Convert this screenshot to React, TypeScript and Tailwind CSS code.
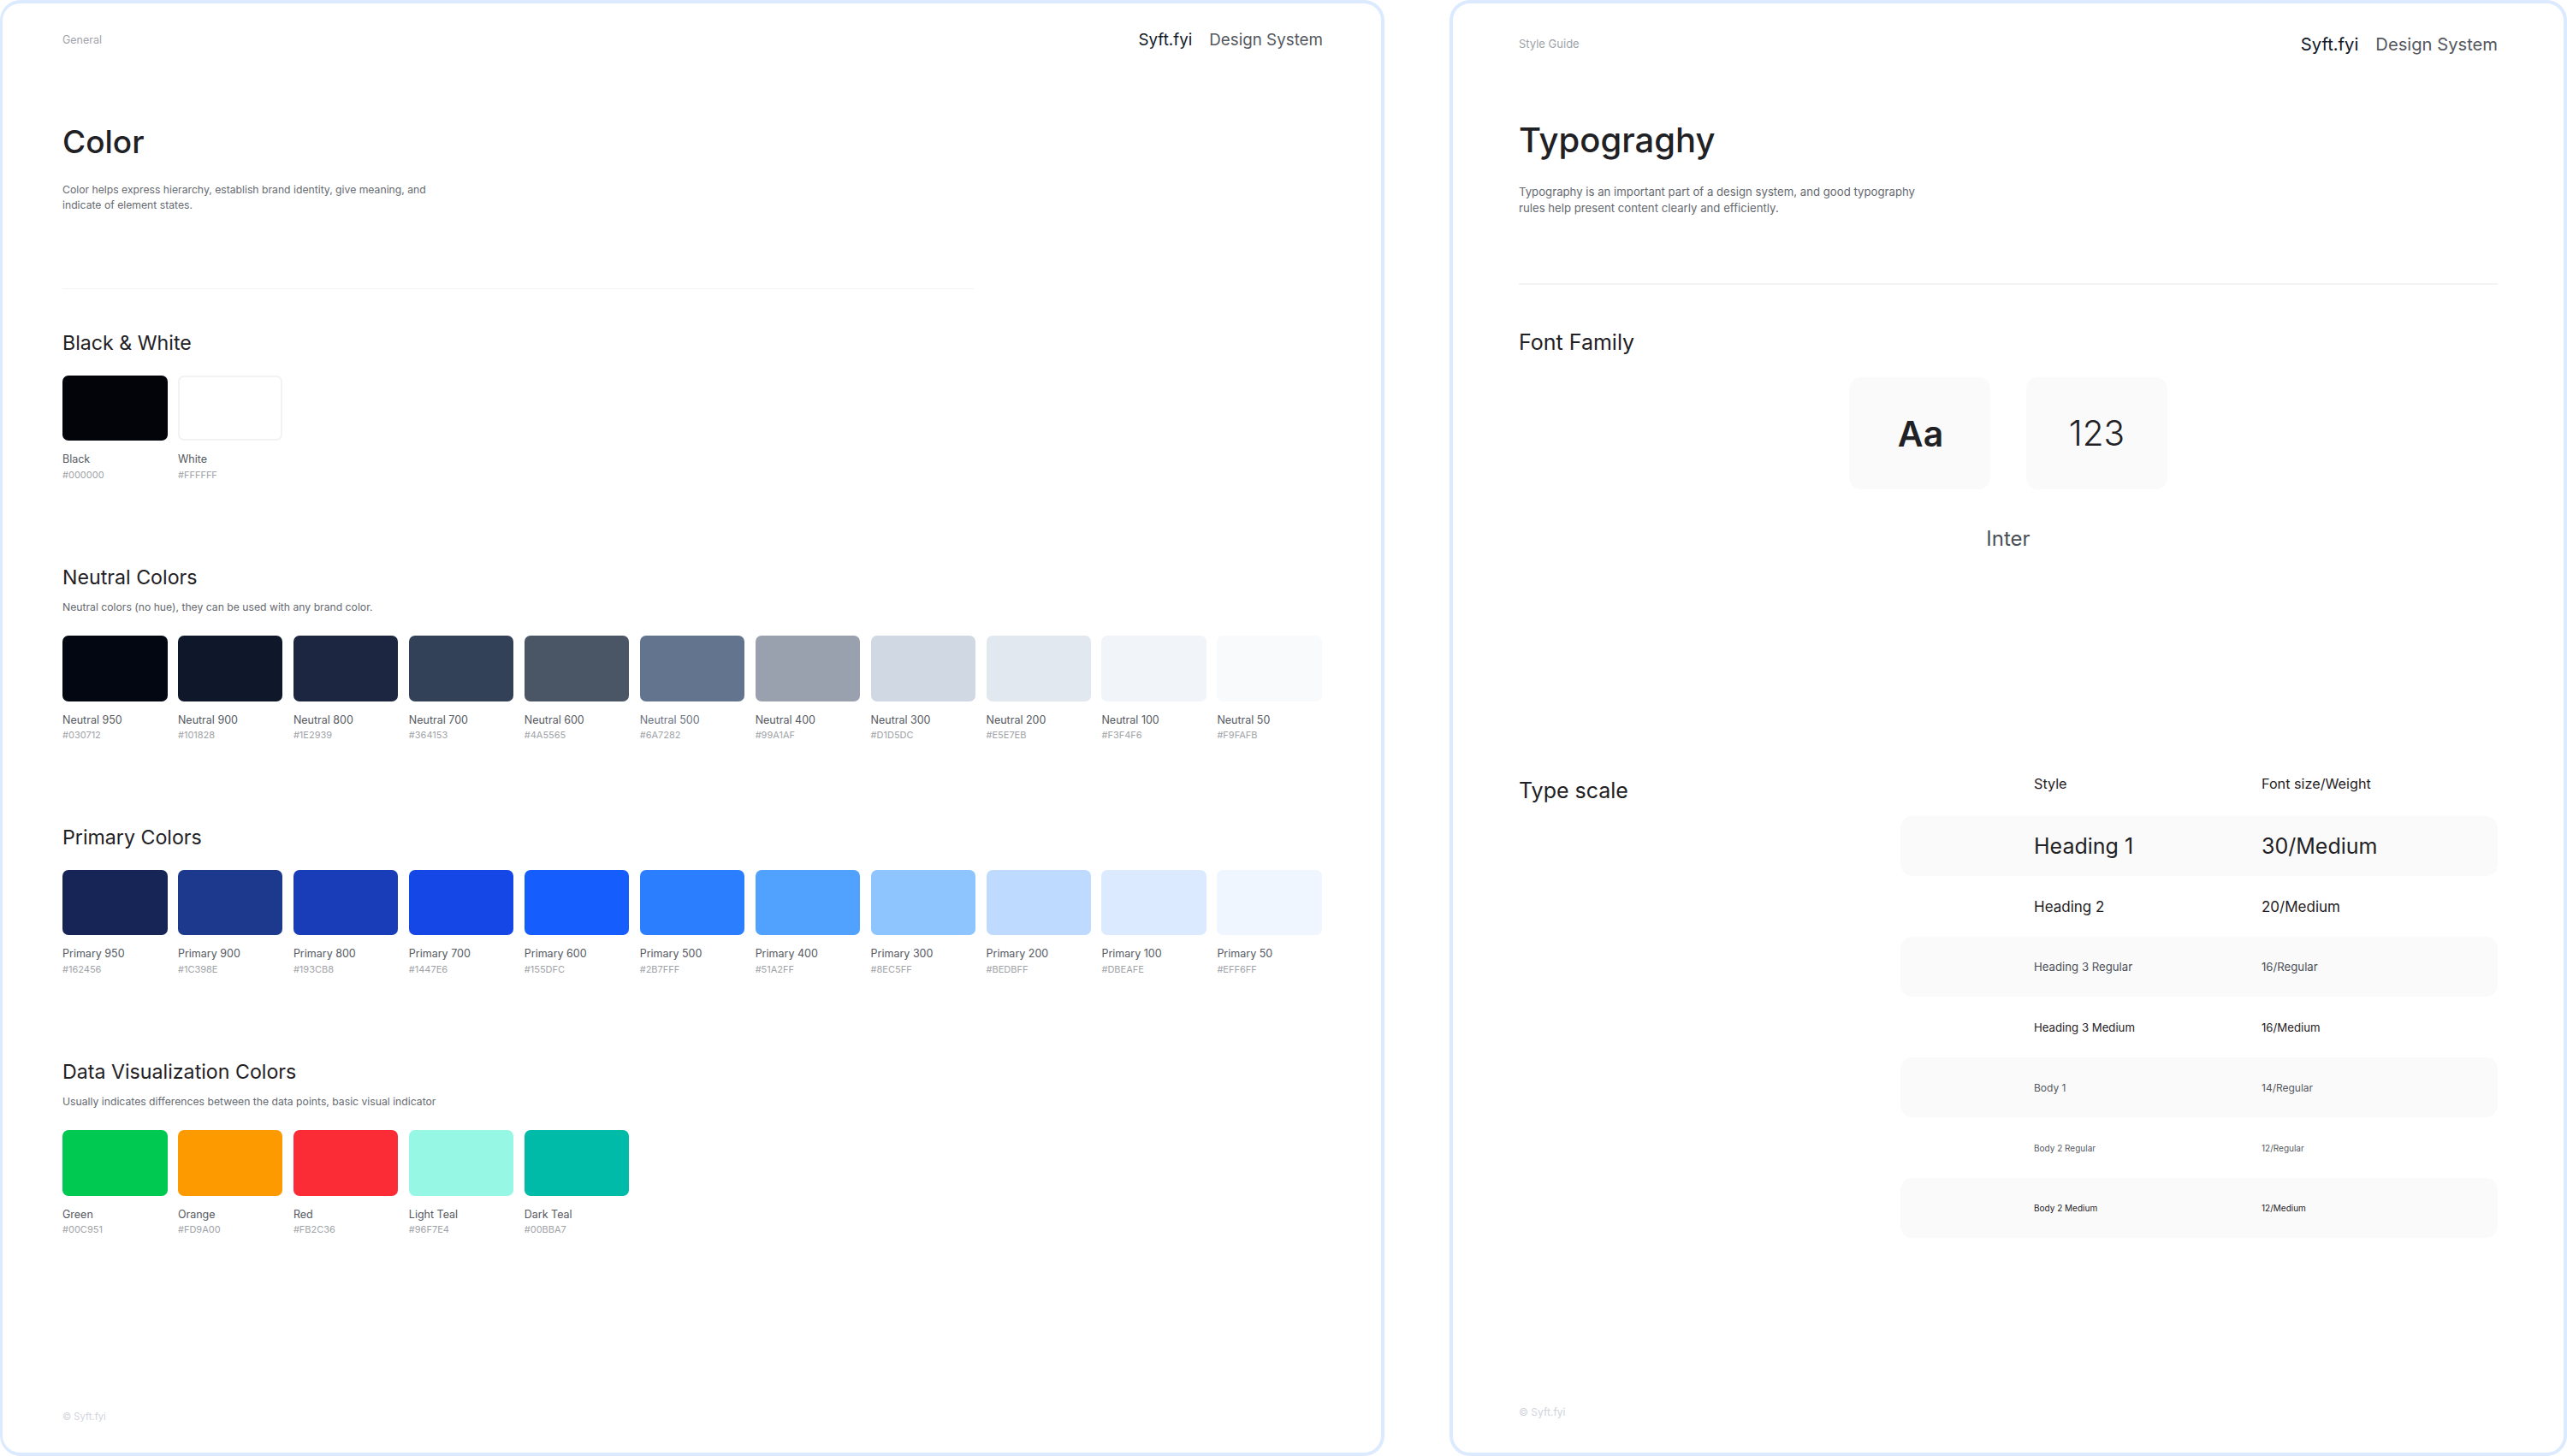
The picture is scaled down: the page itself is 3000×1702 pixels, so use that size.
type Swatch = { name: string; hex: string; bg: string; border?: boolean; muted?: boolean };

const blackWhite: Swatch[] = [
  { name: 'Black', hex: '#000000', bg: 'bg-[#02040a]' },
  { name: 'White', hex: '#FFFFFF', bg: 'bg-white', border: true },
];

const neutrals: Swatch[] = [
  { name: 'Neutral 950', hex: '#030712', bg: 'bg-[#030712]' },
  { name: 'Neutral 900', hex: '#101828', bg: 'bg-[#0f172a]' },
  { name: 'Neutral 800', hex: '#1E2939', bg: 'bg-[#1c2640]' },
  { name: 'Neutral 700', hex: '#364153', bg: 'bg-[#334158]' },
  { name: 'Neutral 600', hex: '#4A5565', bg: 'bg-[#4a5565]' },
  { name: 'Neutral 500', hex: '#6A7282', bg: 'bg-[#62748e]', muted: true },
  { name: 'Neutral 400', hex: '#99A1AF', bg: 'bg-[#99a1af]' },
  { name: 'Neutral 300', hex: '#D1D5DC', bg: 'bg-[#cfd8e3]' },
  { name: 'Neutral 200', hex: '#E5E7EB', bg: 'bg-[#e2e8f0]' },
  { name: 'Neutral 100', hex: '#F3F4F6', bg: 'bg-[#f1f5f9]' },
  { name: 'Neutral 50', hex: '#F9FAFB', bg: 'bg-[#f8fafc]' },
];

const primaries: Swatch[] = [
  { name: 'Primary 950', hex: '#162456', bg: 'bg-[#162456]' },
  { name: 'Primary 900', hex: '#1C398E', bg: 'bg-[#1c398e]' },
  { name: 'Primary 800', hex: '#193CB8', bg: 'bg-[#193cb8]' },
  { name: 'Primary 700', hex: '#1447E6', bg: 'bg-[#1447e6]' },
  { name: 'Primary 600', hex: '#155DFC', bg: 'bg-[#155dfc]' },
  { name: 'Primary 500', hex: '#2B7FFF', bg: 'bg-[#2b7fff]' },
  { name: 'Primary 400', hex: '#51A2FF', bg: 'bg-[#51a2ff]' },
  { name: 'Primary 300', hex: '#8EC5FF', bg: 'bg-[#8ec5ff]' },
  { name: 'Primary 200', hex: '#BEDBFF', bg: 'bg-[#bedbff]' },
  { name: 'Primary 100', hex: '#DBEAFE', bg: 'bg-[#dbeafe]' },
  { name: 'Primary 50', hex: '#EFF6FF', bg: 'bg-[#eff6ff]' },
];

const dataViz: Swatch[] = [
  { name: 'Green', hex: '#00C951', bg: 'bg-[#00c951]' },
  { name: 'Orange', hex: '#FD9A00', bg: 'bg-[#fd9a00]' },
  { name: 'Red', hex: '#FB2C36', bg: 'bg-[#fb2c36]' },
  { name: 'Light Teal', hex: '#96F7E4', bg: 'bg-[#96f7e4]' },
  { name: 'Dark Teal', hex: '#00BBA7', bg: 'bg-[#00bba7]' },
];

const typeRows = [
  { style: 'Heading 1', spec: '30/Medium', cls: 'text-[25px] text-[#1f2125]' },
  { style: 'Heading 2', spec: '20/Medium', cls: 'text-[17px] text-[#1f2125]' },
  { style: 'Heading 3 Regular', spec: '16/Regular', cls: 'text-[13.2px] text-[#4a4f57]' },
  { style: 'Heading 3 Medium', spec: '16/Medium', cls: 'text-[13.2px] text-[#1f2125]' },
  { style: 'Body 1', spec: '14/Regular', cls: 'text-[12px] text-[#55595f]' },
  { style: 'Body 2 Regular', spec: '12/Regular', cls: 'text-[10px] text-[#55595f]' },
  { style: 'Body 2 Medium', spec: '12/Medium', cls: 'text-[10px] text-[#1f2125]' },
];

const Brand = ({ size }: { size: string }) => (
  <div className={`flex items-center gap-5 ${size}`}>
    <span className="text-[#101828]">Syft.fyi</span>
    <span className="text-[#55595f]">Design System</span>
  </div>
);

const SwatchRow = ({ items }: { items: Swatch[] }) => (
  <div className="flex gap-[12.45px]">
    {items.map((s) => (
      <div key={s.name} className="w-[122.5px]">
        <div className={`h-[76.5px] rounded-[7px] ${s.bg} ${s.border ? 'border-2 border-[#f1f2f4]' : ''}`} />
        <div className={`mt-[14px] text-[12.5px] leading-4 ${s.muted ? 'text-[#6a7282]' : 'text-[#55595f]'}`}>{s.name}</div>
        <div className="mt-[2.5px] text-[11px] leading-[14px] text-[#a0a3a8]">{s.hex}</div>
      </div>
    ))}
  </div>
);

const App = () => {
  return (
    <div className="flex h-[1702px] w-[3000px] gap-[76px] bg-white font-[Inter,sans-serif]">
      {/* Color panel */}
      <section className="flex w-[1618px] flex-col rounded-[24px] border-[4px] border-l-[3px] border-[#dbeafe] bg-white pb-[35px] pl-[70px] pr-[68px] pt-[29px]">
        <div className="flex h-[28px] items-center justify-between">
          <span className="text-[12.5px] text-[#a0a3a8]">General</span>
          <Brand size="text-[18.8px]" />
        </div>

        <h1 className="mt-[82px] text-[37px] font-medium leading-[46px] text-[#1f2125]">Color</h1>
        <p className="mt-[24px] w-[440px] text-[12.2px] leading-[18.4px] text-[#666a70]">
          Color helps express hierarchy, establish brand identity, give meaning, and indicate of element states.
        </p>
        <div className="mt-[87px] h-[1.5px] w-[1065px] bg-[#f3f4f6]" />

        <h2 className="mt-[47.5px] text-[23.2px] leading-[30px] text-[#1f2125]">Black &amp; White</h2>
        <div className="mt-[23.1px]">
          <SwatchRow items={blackWhite} />
        </div>

        <h2 className="mt-[98px] text-[23.2px] leading-[30px] text-[#1f2125]">Neutral Colors</h2>
        <p className="mt-[11px] text-[12.2px] leading-[18px] text-[#666a70]">
          Neutral colors (no hue), they can be used with any brand color.
        </p>
        <div className="mt-[24.4px]">
          <SwatchRow items={neutrals} />
        </div>

        <h2 className="mt-[98px] text-[23.2px] leading-[30px] text-[#1f2125]">Primary Colors</h2>
        <div className="mt-[22.4px]">
          <SwatchRow items={primaries} />
        </div>

        <h2 className="mt-[98px] text-[23.2px] leading-[30px] text-[#1f2125]">Data Visualization Colors</h2>
        <p className="mt-[11.2px] text-[12.2px] leading-[18px] text-[#666a70]">
          Usually indicates differences between the data points, basic visual indicator
        </p>
        <div className="mt-[24.3px]">
          <SwatchRow items={dataViz} />
        </div>

        <div className="mt-auto text-[11.2px] leading-[14px] text-[#d1d5dc]">© Syft.fyi</div>
      </section>

      {/* Typography panel */}
      <section className="flex w-[1306px] flex-col rounded-[24px] border-[4px] border-[#dbeafe] bg-white pb-[40px] pl-[77px] pr-[77px] pt-[33px]">
        <div className="flex h-[30px] items-center justify-between">
          <span className="text-[13px] text-[#a0a3a8]">Style Guide</span>
          <Brand size="text-[20.2px]" />
        </div>

        <h1 className="mt-[72px] text-[40px] font-medium leading-[50px] text-[#1f2125]">Typograghy</h1>
        <p className="mt-[25.7px] w-[480px] text-[13.2px] leading-[19.5px] text-[#666a70]">
          Typography is an important part of a design system, and good typography rules help present content clearly and efficiently.
        </p>
        <div className="mt-[77px] h-[2px] bg-[#f3f4f6]" />

        <h2 className="mt-[51.4px] text-[25px] leading-[32px] text-[#1f2125]">Font Family</h2>
        <div className="mt-[24.6px] flex justify-center gap-[42px]">
          <div className="flex h-[131px] w-[165px] items-center justify-center rounded-[14px] bg-[#fafafa] pl-[2px] pt-[3px] text-[41px] font-semibold text-[#1f2125]">Aa</div>
          <div className="flex h-[131px] w-[165px] items-center justify-center rounded-[14px] bg-[#fafafa] pt-[3px] text-[40.5px] font-light text-[#1f2125]">123</div>
        </div>
        <div className="mt-[42px] text-center text-[24px] leading-[32px] text-[#4a4f57]">Inter</div>

        <div className="mt-[260px] flex justify-between">
          <h2 className="pt-[2px] text-[25px] leading-[32px] text-[#1f2125]">Type scale</h2>
          <div className="w-[698px]">
            <div className="flex h-[48px] pl-[156px] text-[16.2px] leading-5 text-[#1f2125]">
              <span className="w-[266px]">Style</span>
              <span>Font size/Weight</span>
            </div>
            {typeRows.map((row, i) => (
              <div
                key={row.style}
                className={`flex h-[70.5px] items-center rounded-[14px] pl-[156px] pt-[2px] ${i % 2 === 0 ? 'bg-[#fafafa]' : ''} ${row.cls}`}
              >
                <span className="w-[266px]">{row.style}</span>
                <span>{row.spec}</span>
              </div>
            ))}
          </div>
        </div>

        <div className="mt-auto text-[12px] leading-[14px] text-[#d1d5dc]">© Syft.fyi</div>
      </section>
    </div>
  );
};

export default App;
